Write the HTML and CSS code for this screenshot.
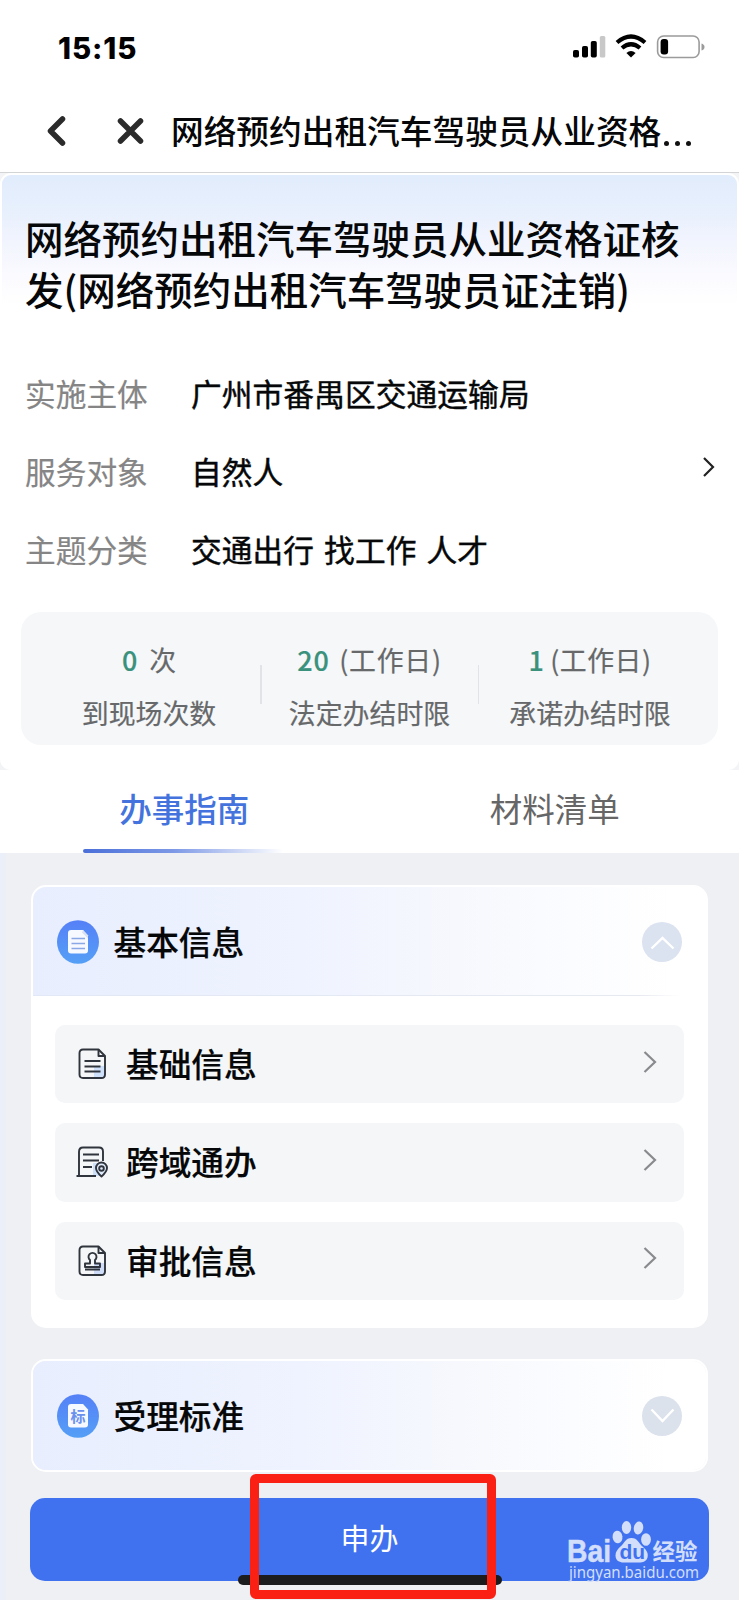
FILE: index.html
```html
<!DOCTYPE html>
<html lang="zh-CN">
<head>
<meta charset="utf-8">
<title>网络预约出租汽车驾驶员从业资格证核发</title>
<link rel="stylesheet" href="styles.css">
</head>
<body>
<div class="phone">
  <div class="status">
    <span class="time">15:15</span>
    <svg class="status-icons" width="134" height="26" viewBox="0 0 134 26">
      <rect x="2" y="16" width="6" height="7.5" rx="1.8"/>
      <rect x="11" y="12" width="6" height="11.5" rx="1.8"/>
      <rect x="19.800" y="7" width="6" height="16.500" rx="1.800"/>
      <rect x="28.800" y="2" width="5.500" height="21.500" rx="1.500" fill="#c8c8c8"/>
      <g fill="none" stroke="#000" stroke-width="4.200">
        <path d="M46 8.500Q60-3.500 74 8.500"/>
        <path d="M51 14Q60 6.500 69 14"/>
      </g>
      <path d="M60 23.500l-4.600-4.600q4.600-3.800 9.200 0z"/>
      <rect x="86.600" y="2" width="41.500" height="21.500" rx="6" fill="none" stroke="#9b9b9b" stroke-width="1.600"/>
      <rect x="89.600" y="5" width="7.500" height="15.500" rx="3"/>
      <path d="M130.500 9.500q3 1 3 3.500t-3 3.500z" fill="#9b9b9b"/>
    </svg>
  </div>
  <div class="nav">
    <svg class="nav-icons" width="100" height="32" viewBox="0 0 100 32" fill="none" stroke="#2b2b2b" stroke-width="5.500" stroke-linecap="round" stroke-linejoin="round">
      <path d="M17.500 4L5.500 16l12 12"/>
      <path d="M75.500 6l20 20M95.500 6l-20 20"/>
    </svg>
    <span class="nav-title">网络预约出租汽车驾驶员从业资格<span class="dots"><i></i><i></i><i></i></span></span>
  </div>

  <div class="summary-wrap">
    <section class="summary">
      <h1>网络预约出租汽车驾驶员从业资格证核<br>发(网络预约出租汽车驾驶员证注销)</h1>
      <div class="row"><span class="label">实施主体</span><span class="value">广州市番禺区交通运输局</span></div>
      <div class="row"><span class="label">服务对象</span><span class="value">自然人</span>
        <svg class="more" width="14" height="22" viewBox="0 0 14 22" fill="none" stroke="#222" stroke-width="2.200"><path d="M2 2l9 9-9 9"/></svg>
      </div>
      <div class="row"><span class="label">主题分类</span><span class="value">交通出行 找工作 人才</span></div>
      <div class="stats">
        <div class="stat"><p><b>0</b> 次</p><p>到现场次数</p></div>
        <div class="rule"></div>
        <div class="stat middle"><p class="wide"><b>20</b> (工作日)</p><p>法定办结时限</p></div>
        <div class="rule"></div>
        <div class="stat"><p class="tight"><b>1</b> (工作日)</p><p>承诺办结时限</p></div>
      </div>
    </section>
  </div>

  <div class="tabs">
    <div class="tab active">办事指南</div>
    <div class="tab">材料清单</div>
  </div>

  <main class="content">
    <section class="card">
      <header class="card-head lined">
        <svg class="badge" width="42" height="44" viewBox="0 0 42 44">
          <defs><linearGradient id="blue" x1="0" y1="0" x2="0" y2="1"><stop offset="0" stop-color="#5580f7"/><stop offset="1" stop-color="#559ff6"/></linearGradient></defs>
          <ellipse cx="21" cy="22" rx="21" ry="21.800" fill="url(#blue)"/>
          <path d="M14 10h12l5 5.500v15q0 3-3 3H14q-3 0-3-3V13q0-3 3-3z" fill="#f6f9ff"/>
          <path d="M26 10l5 5.500v3l-6-6z" fill="#d9e0f2"/>
          <path d="M14.500 18.500H28M14.500 23.500H28M14.500 28.500H28" stroke="#8aa7e6" stroke-width="1.500"/>
        </svg>
        <h2>基本信息</h2>
        <svg class="toggle" width="40" height="40" viewBox="0 0 40 40"><circle cx="20" cy="20" r="20" fill="#dbe2f0"/><path d="M9.500 26.500L20.500 16l11 10.500" fill="none" stroke="#fff" stroke-width="2.400"/></svg>
      </header>
      <div class="items">
        <div class="item">
          <svg class="ico" width="32" height="32" viewBox="0 0 32 32" fill="none" stroke="#30343c" stroke-width="1.900" stroke-linejoin="round">
            <path d="M18 18h11v12H18z" fill="#cfe1fa" stroke="none"/>
            <path d="M7 1.500h15.500L29 8v18.500q0 3.500-3.500 3.500H7q-3.500 0-3.500-3.500V5Q3.500 1.500 7 1.500z"/><path d="M22.500 1.500V8H29M8.500 13h16M8.500 18.500h16M8.500 23.500h16"/>
          </svg>
          <h3>基础信息</h3>
          <svg class="arrow" width="14" height="24" viewBox="0 0 14 24"><path d="M1.500 2L12 12 1.500 22"/></svg>
        </div>
        <div class="item">
          <svg class="ico" width="32" height="32" viewBox="0 0 32 32" fill="none" stroke="#30343c" stroke-width="1.900" stroke-linejoin="round">
            <path d="M17 17h9v13h-9z" fill="#cfe1fa" stroke="none"/>
            <path d="M.5 30H20M3 30V6q0-4.500 4-4.500h16q4 0 4 4V15M7 8.500h16M7 14.500h16M7 21h9"/>
            <path d="M25.500 30.500q-5.500-5-5.500-8.500a5.500 5.500 0 0 1 11 0q0 3.500-5.500 8.500z" fill="#dfeafa"/><circle cx="25.500" cy="22.500" r="2.300"/>
          </svg>
          <h3>跨域通办</h3>
          <svg class="arrow" width="14" height="24" viewBox="0 0 14 24"><path d="M1.500 2L12 12 1.500 22"/></svg>
        </div>
        <div class="item">
          <svg class="ico" width="32" height="32" viewBox="0 0 32 32" fill="none" stroke="#30343c" stroke-width="1.900" stroke-linejoin="round">
            <path d="M18 18h11v12H18z" fill="#cfdcf8" stroke="none"/>
            <path d="M7 1.500h15.500L29 8v18.500q0 3.500-3.500 3.500H7q-3.500 0-3.500-3.500V5Q3.500 1.500 7 1.500z"/><path d="M22.500 1.500V8H29"/>
            <path d="M9 18.500h5v-3.500a4 4 0 1 1 5 0v3.500h5V22H9zM9 24.500h15"/>
          </svg>
          <h3>审批信息</h3>
          <svg class="arrow" width="14" height="24" viewBox="0 0 14 24"><path d="M1.500 2L12 12 1.500 22"/></svg>
        </div>
      </div>
    </section>

    <section class="card">
      <header class="card-head">
        <svg class="badge" width="42" height="44" viewBox="0 0 42 44">
          <ellipse cx="21" cy="22" rx="21" ry="21.800" fill="url(#blue)"/>
          <path d="M14 10h12l5 5.500v15q0 3-3 3H14q-3 0-3-3V13q0-3 3-3z" fill="#f6f9ff"/>
          <text x="21" y="28" text-anchor="middle" class="badge-text">标</text>
        </svg>
        <h2>受理标准</h2>
        <svg class="toggle" width="40" height="40" viewBox="0 0 40 40"><circle cx="20" cy="20" r="20" fill="#dbe2ec"/><path d="M9.500 13.500L20.500 25l11-11.500" fill="none" stroke="#fff" stroke-width="2.400"/></svg>
      </header>
    </section>
  </main>

  <div class="apply">申办</div>
  <div class="home-bar"></div>
  <div class="marker"></div>
  <svg class="watermark" width="136" height="66" viewBox="0 0 136 66">
    <text x="-1" y="41.500" class="wm-bai" textLength="44" lengthAdjust="spacingAndGlyphs">Bai</text>
    <g fill="#d3defb">
      <ellipse cx="49.500" cy="17" rx="4.900" ry="6.300" transform="rotate(-8 49.500 17)"/><ellipse cx="58.500" cy="7.500" rx="4.700" ry="6.500"/><ellipse cx="70.500" cy="8" rx="4.700" ry="6.500" transform="rotate(10 70.500 8)"/><ellipse cx="78" cy="19.500" rx="4.900" ry="6.300"/>
      <path d="M63.500 18c6 0 7 5 11 8.500 4.500 4 6 7 5 11-1 4-5 5-8 5H55.500c-4 0-8-2-8-7 0-4 2-6 5-9 4-3.500 5-8.500 11-8.500z"/>
    </g>
    <text x="51.500" y="38.500" class="wm-du">du</text>
    <text x="84.500" y="40" class="wm-cn">经验</text>
    <text x="1" y="58" class="wm-url" textLength="130" lengthAdjust="spacingAndGlyphs">jingyan.baidu.com</text>
  </svg>
</div>
</body>
</html>
```

FILE: styles.css
```css
* { box-sizing: border-box; }
body, h1, h2, h3, p { margin: 0; }
body {
  width: 739px;
  height: 1600px;
  overflow: hidden;
  background: linear-gradient(90deg, #ebeff9 0, #ebeff9 4px, #eff0f4 7px);
  color: #060708;
  font-family: "Noto Sans CJK SC", sans-serif;
}
.phone { position: relative; height: 1600px; display: flex; flex-direction: column; }
svg { display: block; flex: none; }

.status { height: 95px; flex: none; background: #fff; display: flex; justify-content: space-between; padding: 34px 34px 0 58px; }
.time { font: 800 29.500px/28px Inter, sans-serif; letter-spacing: 0.9px; color: #000; }
.nav { height: 78px; flex: none; background: #fff; border-bottom: 1px solid #d2d4d6; display: flex; align-items: center; padding: 0 0 5px 45px; }
.nav-title { margin: -3px 0 0 26px; font-size: 32.700px; line-height: 48px; font-weight: 500; display: flex; white-space: nowrap; }
.dots { display: flex; gap: 6px; align-items: flex-end; padding: 0 0 8px 3px; }
.dots i { width: 5px; height: 5px; border-radius: 50%; background: #111; }

.summary-wrap { flex: none; height: 597px; background: #f3f4f6; }
.summary {
  height: 597px;
  border: 2px solid #fff;
  border-radius: 11px;
  background: linear-gradient(#e1ecfc 0, #e8f0fd 38px, #f3f5fe 70px, #fbfbff 104px, #fff 130px);
  padding: 37px 19px 0;
}
h1 { padding-left: 4px; font-size: 38.500px; line-height: 51px; font-weight: 500; white-space: nowrap; height: 142px; }
.row { display: flex; align-items: center; height: 78px; padding-left: 4px; font-size: 30.700px; line-height: 44px; white-space: nowrap; }
.label { width: 166px; color: #858585; -webkit-text-stroke: 0.200px #858585; }
.value { word-spacing: 3px; letter-spacing: 0.100px; flex: 1; -webkit-text-stroke: 0.450px #060708; }
.more { margin: -8px 2px 0 0; }
.stats { margin-top: 24px; height: 133px; padding: 15px 17px 0; background: #f5f7f9; border-radius: 20px; display: flex; align-items: center; font-size: 26.900px; line-height: 53px; color: #66686a; text-align: center; white-space: nowrap; -webkit-text-stroke: 0.200px; }
.stat { flex: 1; word-spacing: 5px; }
.stat.middle { flex: 0 0 216px; }
.stat b { color: #3a917c; font-weight: 500; letter-spacing: 0.800px; }
.stat .wide { letter-spacing: 0.700px; word-spacing: 3px; }
.stat .tight { word-spacing: -1px; letter-spacing: 0.500px; }
.rule { width: 1.500px; height: 39px; background: #e1e3e6; margin-top: -3px; }

.tabs { height: 83px; flex: none; display: flex; background: #fff; }
.tab { flex: 1; text-align: center; font-size: 32.500px; line-height: 76px; color: #666; position: relative; }
.tab.active { color: #4473de; font-weight: 500; padding-right: 2px; }
.tab.active::after { content: ""; position: absolute; left: 83px; bottom: 0; width: 200px; height: 4px; border-radius: 2px; background: linear-gradient(90deg, #4a6fd8, #7c98e6 45%, #c5d1f4 75%, #fff); }

.content { flex: none; height: 644px; padding: 32px 31px 0; display: flex; flex-direction: column; gap: 31px; }
.card { background: #fff; border: 2px solid #fff; border-radius: 15px; overflow: hidden; flex: none; }
.card-head { height: 109px; display: flex; align-items: center; padding: 1px 24px 0 23.500px; background: linear-gradient(90deg, #e8eefe 0, #eff3ff 40%, #f6f8fd 63%, #fbfcff 80%, #fff 95%); }
.card-head.lined { border-bottom: 1px solid #e6eaf3; border-image: linear-gradient(90deg, #e2e8f6, #e6e9f0 90%, #fff 96%) 1; }
h2, h3 { margin-top: -2px; font-size: 32.700px; line-height: 46px; font-weight: 500; flex: 1; white-space: nowrap; -webkit-text-stroke: 0.200px #060708; }
h2 { padding-left: 15px; }
.badge-text { font-size: 15px; font-weight: 700; fill: #6a91ee; }
.items { padding: 29px 22px 26px; display: flex; flex-direction: column; gap: 20px; }
.item { height: 78.300px; border-radius: 10px; background: #f4f6f8; display: flex; align-items: center; padding: 0 27px 0 21px; }
h3 { padding-left: 18px; }
.arrow { fill: none; stroke: #888a8d; stroke-width: 2.200; margin-top: -5px; }

.apply { margin: 1px 30px 0; height: 83px; border-radius: 15px; background: #4072f0; color: #fff; text-align: center; font-size: 29px; line-height: 78px; flex: none; font-weight: 400; }
.home-bar { position: absolute; left: 238px; top: 1575px; width: 264px; height: 10px; border-radius: 5px; background: #1c1c1e; }
.marker { position: absolute; left: 250px; top: 1474px; width: 246px; height: 125px; border: 9px solid #fb2014; border-radius: 6px; }
.watermark { position: absolute; left: 568px; top: 1520px; overflow: visible; }
.wm-bai { font: 700 30.500px "Liberation Sans", sans-serif; fill: #d3defb; stroke: #d3defb; stroke-width: 0.500px; }
.wm-du { font: 700 21px "Liberation Sans", sans-serif; fill: #4072f0; }
.wm-cn { font-size: 22.500px; font-weight: 700; fill: #d3defb; }
.wm-url { font: 400 15.500px "Noto Sans", sans-serif; fill: #d3defb; }
```
